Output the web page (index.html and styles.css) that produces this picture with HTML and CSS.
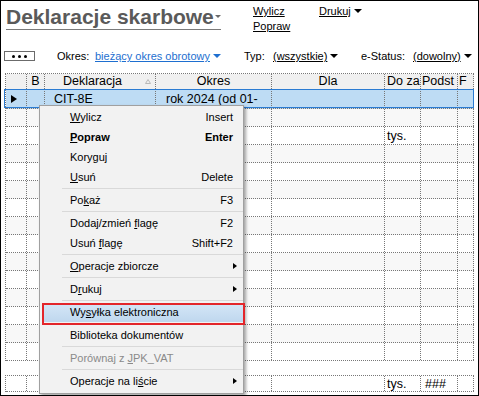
FILE: index.html
```html
<!DOCTYPE html>
<html lang="pl">

<head>
    <meta charset="UTF-8">
    <title>Deklaracje skarbowe</title>
    <link rel="stylesheet" href="styles.css">
</head>

<body>
    <div class="window">

        <div class="topbar">
            <div class="title">Deklaracje skarbowe<span class="title-arrow"></span></div>
            <div class="actions">
                <span><span class="act">Wylicz</span></span>
                <span><span class="act">Drukuj</span><span class="tri"></span></span>
                <span><span class="act">Popraw</span></span>
            </div>
        </div>

        <div class="filters">
            <span class="more-btn"><i></i><i></i><i></i></span>
            <div class="filter f-okres">
                <span class="flabel">Okres:</span><span class="link">bieżący okres obrotowy</span><span class="tri blue"></span>
            </div>
            <div class="filter f-typ">
                <span class="flabel">Typ:</span><span class="act">(wszystkie)</span><span class="tri"></span>
            </div>
            <div class="filter f-status">
                <span class="flabel">e-Status:</span><span class="act">(dowolny)</span><span class="tri"></span>
            </div>
        </div>

        <div class="grid">
            <div class="row head">
                <div></div>
                <div class="center">B</div>
                <div class="col-dekl">Deklaracja<svg class="sort" width="6" height="5" viewBox="0 0 6 5"><path d="M0.5 4.5 L3 0.5 L5.5 4.5 Z" fill="none" stroke="#b8b8b8" stroke-width="1"/></svg></div>
                <div class="center">Okres</div>
                <div class="center">Dla</div>
                <div class="pad2">Do za</div>
                <div class="pad1">Podst</div>
                <div class="pad1">F</div>
            </div>
            <div class="row sel">
                <div class="ind"><span class="pointer"></span></div>
                <div></div>
                <div class="pad9">CIT-8E</div>
                <div class="pad10">rok 2024 (od 01-</div>
                <div></div>
                <div></div>
                <div></div>
                <div></div>
            </div>
            <div class="row tint"><div></div><div></div><div></div><div></div><div></div><div></div><div></div><div></div></div>
            <div class="row"><div></div><div></div><div></div><div></div><div></div><div class="pad2">tys.</div><div></div><div></div></div>
            <div class="row tint"><div></div><div></div><div></div><div></div><div></div><div></div><div></div><div></div></div>
            <div class="row"><div></div><div></div><div></div><div></div><div></div><div></div><div></div><div></div></div>
            <div class="row tint"><div></div><div></div><div></div><div></div><div></div><div></div><div></div><div></div></div>
            <div class="row"><div></div><div></div><div></div><div></div><div></div><div></div><div></div><div></div></div>
            <div class="row tint"><div></div><div></div><div></div><div></div><div></div><div></div><div></div><div></div></div>
            <div class="row"><div></div><div></div><div></div><div></div><div></div><div></div><div></div><div></div></div>
            <div class="row tint"><div></div><div></div><div></div><div></div><div></div><div></div><div></div><div></div></div>
            <div class="row"><div></div><div></div><div></div><div></div><div></div><div></div><div></div><div></div></div>
            <div class="row tint"><div></div><div></div><div></div><div></div><div></div><div></div><div></div><div></div></div>
            <div class="row"><div></div><div></div><div></div><div></div><div></div><div></div><div></div><div></div></div>
            <div class="row tint"><div></div><div></div><div></div><div></div><div></div><div></div><div></div><div></div></div>
            <div class="row"><div></div><div></div><div></div><div></div><div></div><div></div><div></div><div></div></div>
        </div>

        <!-- summary row under the list -->
        <div class="grid totals">
            <div class="row sum"><div></div><div></div><div></div><div></div><div></div><div class="pad2">tys.</div><div class="pad4">###</div><div></div></div>
        </div>

        <!-- context menu -->
        <div class="menu">
            <div class="mi"><span><u>W</u>ylicz</span><span class="key">Insert</span></div>
            <div class="mi bold"><span><u>P</u>opraw</span><span class="key">Enter</span></div>
            <div class="mi"><span>Korygu<u>j</u></span></div>
            <div class="mi"><span><u>U</u>suń</span><span class="key">Delete</span></div>
            <div class="sep"></div>
            <div class="mi"><span>Po<u>k</u>aż</span><span class="key">F3</span></div>
            <div class="sep"></div>
            <div class="mi"><span>Dodaj/zmień <u>f</u>lagę</span><span class="key">F2</span></div>
            <div class="mi"><span>Usuń <u>f</u>lagę</span><span class="key">Shift+F2</span></div>
            <div class="sep"></div>
            <div class="mi"><span><u>O</u>peracje zbiorcze</span><span class="sub"></span></div>
            <div class="sep"></div>
            <div class="mi"><span>D<u>r</u>ukuj</span><span class="sub"></span></div>
            <div class="sep"></div>
            <div class="mi hot"><span>Wy<u>s</u>yłka elektroniczna</span></div>
            <div class="sep"></div>
            <div class="mi"><span>Biblioteka dokumentów</span></div>
            <div class="sep"></div>
            <div class="mi off"><span>Porównaj z <u>J</u>PK_VAT</span></div>
            <div class="sep"></div>
            <div class="mi"><span>Operacje na li<u>ś</u>cie</span><span class="sub"></span></div>
        </div>

    </div>
</body>

</html>
```

FILE: styles.css
```css
body {
    margin: 0;
}

.window {
    position: relative;
    width: 479px;
    height: 396px;
    box-sizing: border-box;
    border: 1px solid #000;
    overflow: hidden;
    background: #fff;
    font-family: "Liberation Sans", Arial, sans-serif;
    color: #000;
}

/* Title and action links */
.topbar {
    display: flex;
    align-items: flex-start;
    height: 31px;
    padding: 3px 0 0 5px;
}

.title {
    display: flex;
    align-items: center;
    width: 215px;
    height: 24px;
    margin-top: 1px;
    border-bottom: 1px solid #7a7a7a;
    font-size: 21px;
    font-weight: bold;
    line-height: 24px;
    color: #5a5a5a;
}

.title-arrow {
    margin-left: auto;
    margin-bottom: 2px;
    border-top: 3px solid #6a6a6a;
    border-left: 3px solid transparent;
    border-right: 3px solid transparent;
}

.actions {
    display: grid;
    grid-template-columns: 66px auto;
    margin-left: 32px;
    font-size: 11px;
    line-height: 15px;
}

.act {
    text-decoration: underline;
}

.tri {
    display: inline-block;
    vertical-align: 2px;
    margin-left: 3px;
    border-top: 4px solid #000;
    border-left: 4px solid transparent;
    border-right: 4px solid transparent;
}

.tri.blue {
    border-top-color: #1e6fd0;
}

/* Filter bar */
.filters {
    display: flex;
    align-items: center;
    height: 16px;
    margin-top: 13px;
    padding-left: 3px;
    font-size: 11px;
    line-height: 16px;
}

.more-btn {
    display: flex;
    align-items: center;
    justify-content: center;
    gap: 3px;
    width: 31px;
    height: 10px;
    box-sizing: border-box;
    margin-right: 22px;
    border: 1px solid #6b6b6b;
}

.more-btn i {
    width: 3px;
    height: 3px;
    border-radius: 50%;
    background: #000;
}

.filter {
    display: flex;
    align-items: center;
    white-space: nowrap;
}

.f-okres {
    width: 187px;
}

.f-okres .flabel {
    width: 38px;
}

.f-typ {
    width: 117px;
}

.f-typ .flabel {
    width: 29px;
}

.f-status .flabel {
    width: 52px;
}

.link {
    color: #1e6fd0;
    text-decoration: underline;
}

.filter .tri {
    vertical-align: 0;
    margin-bottom: 1px;
}

/* List */
.grid {
    width: 468px;
    margin: 9px 0 0 4px;
    border-top: 1px dotted #777;
    border-left: 1px dotted #777;
    font-size: 12.5px;
}

.row {
    display: grid;
    grid-template-columns: 21px 18px 111px 116px 113px 36px 37px 16px;
    height: 18px;
    box-sizing: border-box;
    border-bottom: 1px dotted #777;
    line-height: 16px;
}

.row > div {
    box-sizing: border-box;
    padding-top: 1px;
    border-right: 1px dotted #777;
    overflow: hidden;
    white-space: nowrap;
}

.row.tint {
    background: #f8f8f8;
}

.row.head {
    height: 16px;
    line-height: 15px;
    background: #f0f0f0;
}

.row.head > div {
    padding-top: 0;
}

.row.sel {
    position: relative;
    height: 20px;
    margin-top: -1px;
    line-height: 18px;
    background: #bedcf4;
}

.row.sel::after {
    content: "";
    position: absolute;
    left: -2px;
    right: 0;
    top: 0;
    bottom: 0;
    border: 1px solid #2a7bd2;
}

.row.sum {
    height: 16px;
    line-height: 14px;
}

.totals {
    margin-top: 14px;
}

.center {
    text-align: center;
}

.col-dekl {
    display: flex;
    align-items: center;
    padding-left: 18px;
}

.sort {
    margin-left: auto;
    margin-right: 4px;
}

.pad1 {
    padding-left: 1px;
}

.pad2 {
    padding-left: 2px;
}

.pad4 {
    padding-left: 4px;
}

.pad9 {
    padding-left: 9px;
}

.pad10 {
    padding-left: 10px;
}

.ind {
    display: flex;
    align-items: center;
    padding-left: 5px;
}

.pointer {
    border-left: 6px solid #000;
    border-top: 4.5px solid transparent;
    border-bottom: 4.5px solid transparent;
}

/* Context menu */
.menu {
    position: absolute;
    left: 38px;
    top: 104px;
    z-index: 2;
    width: 205px;
    box-sizing: border-box;
    padding: 1px 0 2px;
    border: 1px solid #a0a0a0;
    background: #f2f2f2;
    box-shadow: 2px 2px 3px rgba(0, 0, 0, 0.35);
    font-size: 11px;
}

.mi {
    display: flex;
    align-items: center;
    justify-content: space-between;
    height: 20px;
    padding: 0 10px 0 30px;
    line-height: 20px;
    white-space: nowrap;
}

.mi.bold {
    font-weight: bold;
}

.mi.off {
    color: #8a8a8a;
}

.mi.hot {
    position: relative;
    background: linear-gradient(#d4e6f7, #bfd7ee) 3px 2px / calc(100% - 3px) 18px no-repeat;
}

.mi.hot::after {
    content: "";
    position: absolute;
    left: 2px;
    right: -2px;
    top: 1px;
    bottom: -3px;
    border: 2px solid #e3262b;
}

.sub {
    margin-right: -4px;
    border-left: 4px solid #000;
    border-top: 3.5px solid transparent;
    border-bottom: 3.5px solid transparent;
}

.sep {
    height: 1px;
    margin: 1px 0 1px 22px;
    background: #d9d9d9;
}
```
